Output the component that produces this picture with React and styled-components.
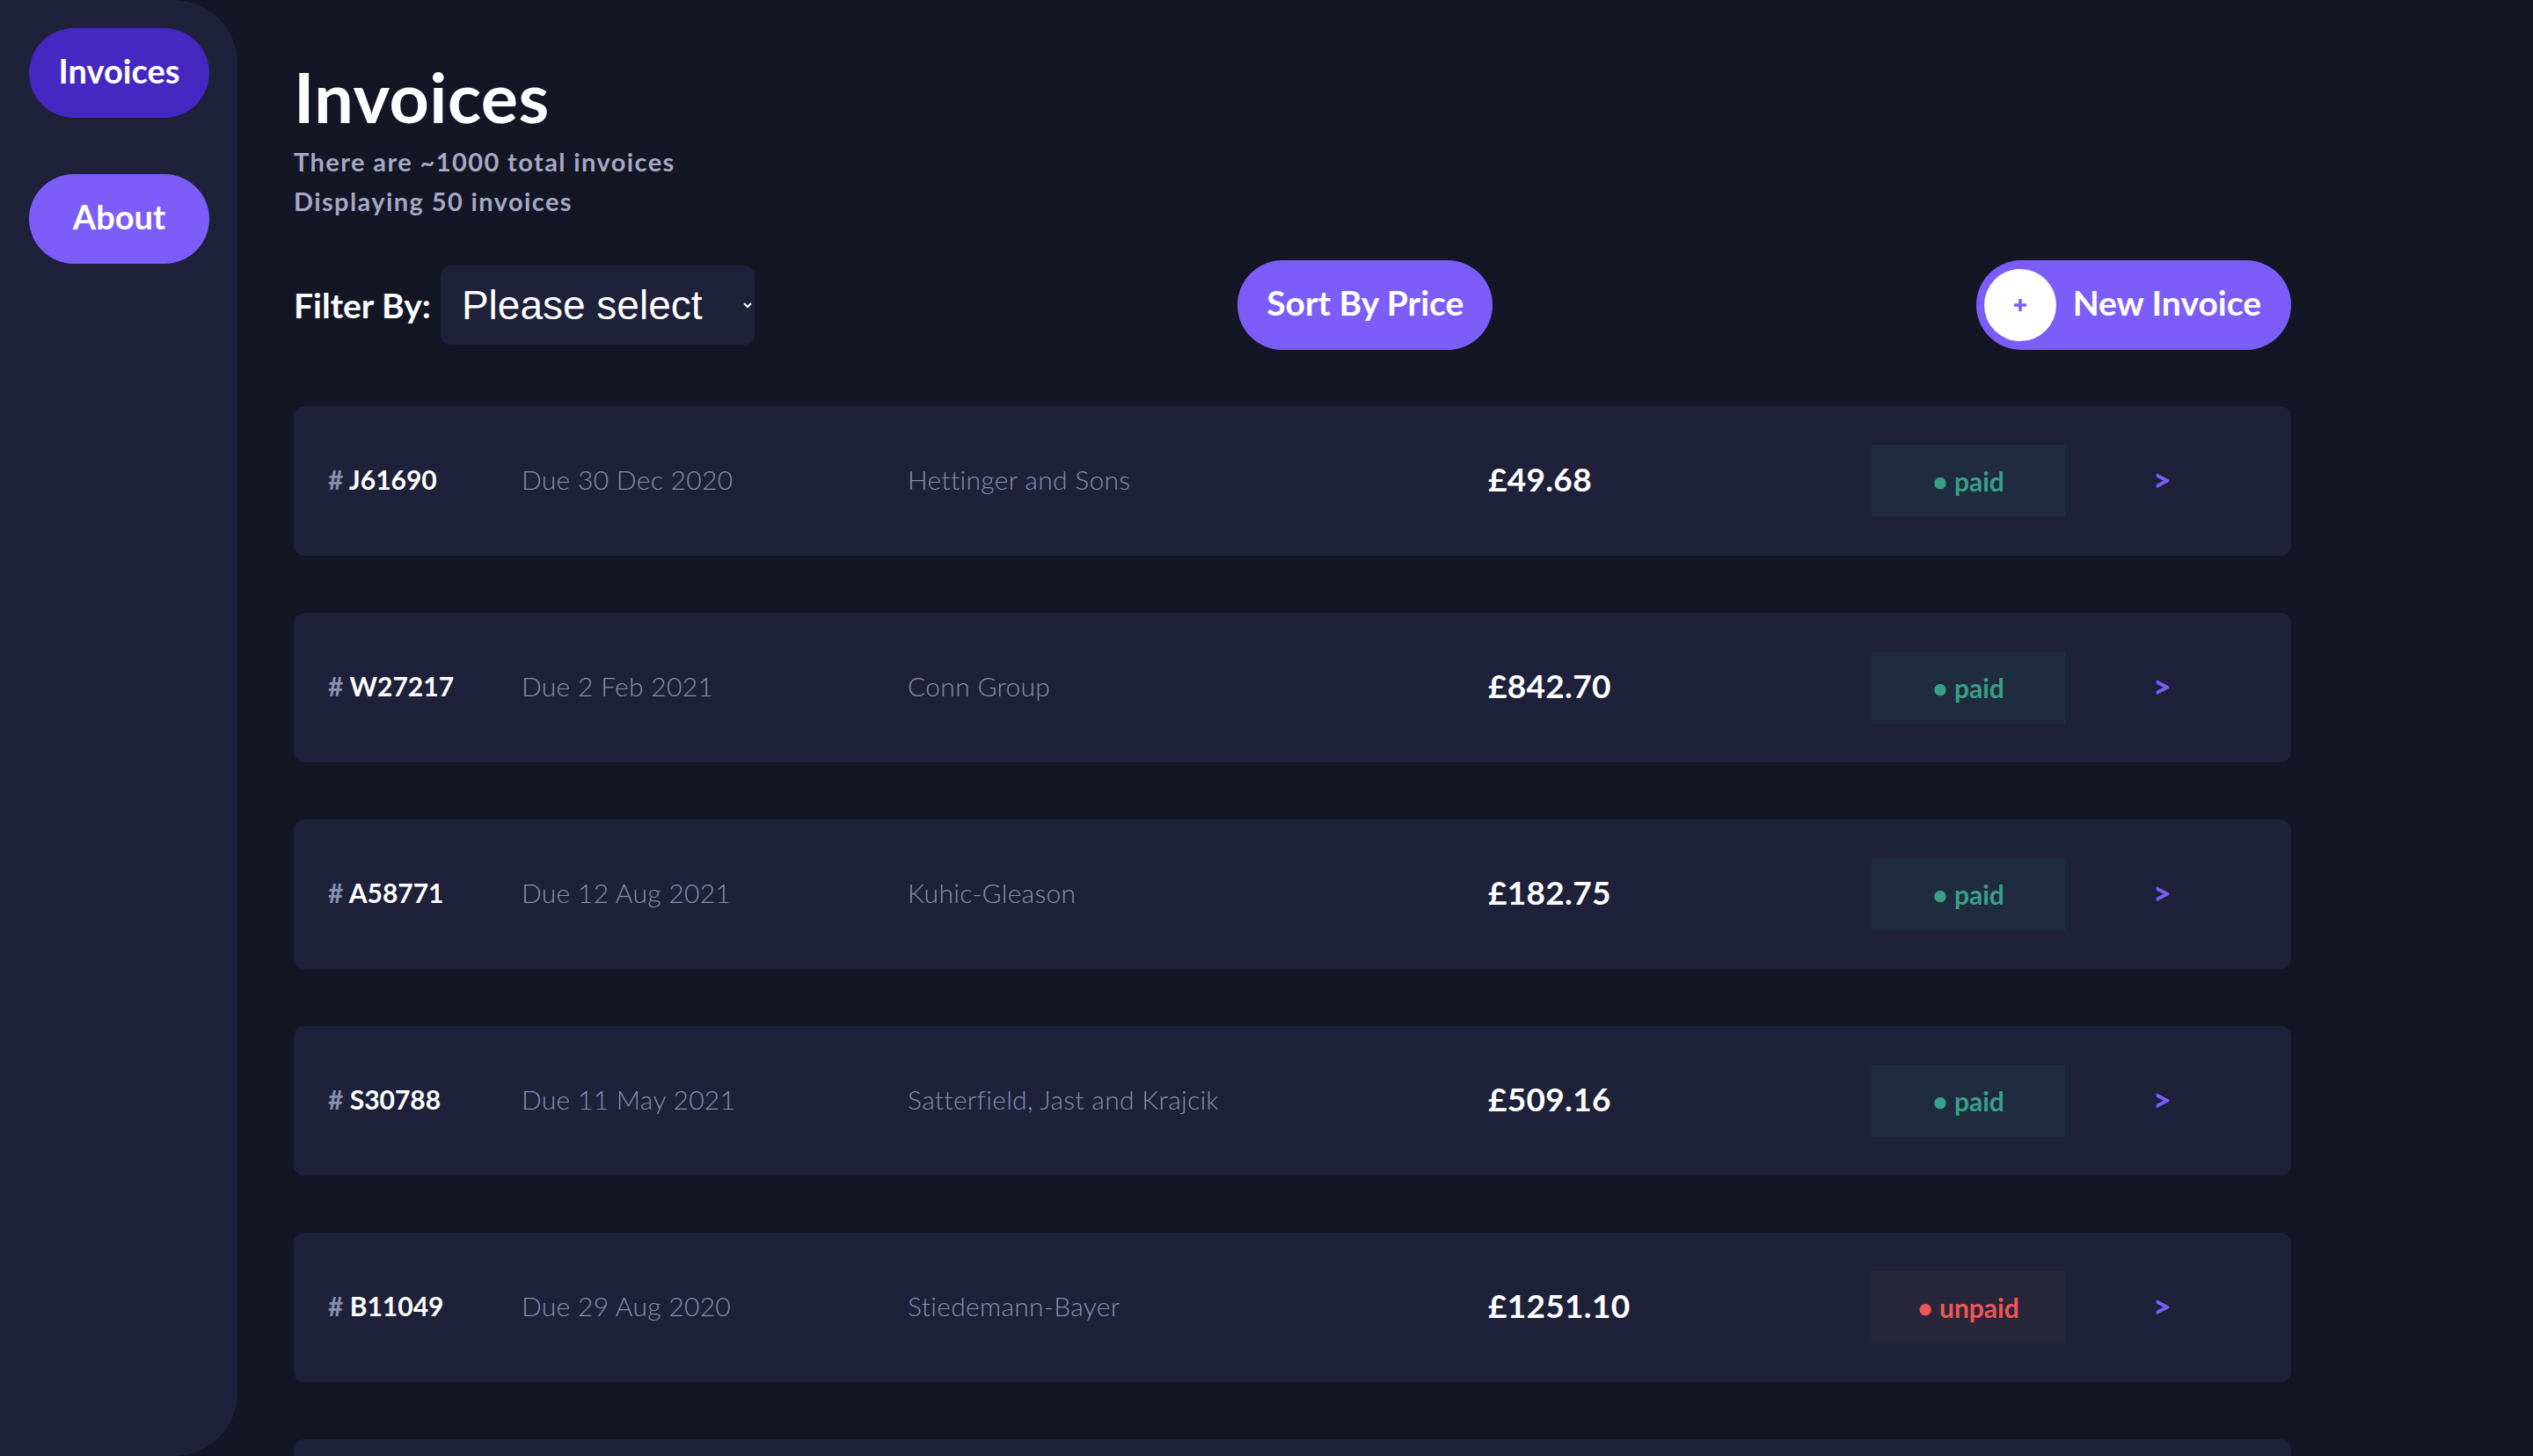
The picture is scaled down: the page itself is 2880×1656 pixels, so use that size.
import React from "react";
import styled, { createGlobalStyle } from "styled-components";

const GlobalStyle = createGlobalStyle`
  body {
    margin: 0;
    background: #141625;
    color: #fff;
    font-family: Lato, "Noto Sans", sans-serif;
  }
`;

const Page = styled.div`
  display: flex;
  align-items: flex-start;
`;

const Sidebar = styled.nav`
  position: sticky;
  top: 0;
  flex: 0 0 270px;
  height: 100vh;
  box-sizing: border-box;
  padding: 32px 0 0 33px;
  background: #1e2139;
  border-radius: 0 72px 72px 0;
  display: flex;
  flex-direction: column;
  gap: 64px;
`;

const NavButton = styled.a`
  width: 205px;
  height: 102px;
  box-sizing: border-box;
  padding-bottom: 7px;
  border-radius: 51px;
  display: flex;
  align-items: center;
  justify-content: center;
  background: ${(p) => (p.$active ? "#4527c2" : "#7c5dfa")};
  color: #fff;
  font-size: 38px;
  font-weight: 700;
  text-decoration: none;
`;

const Main = styled.main`
  width: 2271px;
  padding: 66px 0 64px 64px;
`;

const Title = styled.h1`
  margin: 0;
  font-size: 79px;
  line-height: 88px;
  font-weight: 700;
  letter-spacing: 0.5px;
`;

const Meta = styled.p`
  margin: 0;
  font-size: 29px;
  line-height: 45px;
  font-weight: 700;
  letter-spacing: 1.4px;
  color: #a6a8c4;
`;

const MetaBlock = styled.div`
  margin-top: 7px;
`;

const Toolbar = styled.div`
  margin-top: 45px;
  display: flex;
  align-items: center;
  justify-content: space-between;
`;

const FilterGroup = styled.label`
  display: flex;
  align-items: center;
  gap: 11px;
  font-size: 39px;
  font-weight: 700;
`;

const Select = styled.select`
  width: 357px;
  height: 90px;
  padding: 0 10px 0 20px;
  border: none;
  border-radius: 12px;
  background: #1e2139;
  color: #fff;
  font-family: "Liberation Sans", Arial, sans-serif;
  font-size: 46px;
`;

const PillButton = styled.button`
  height: 102px;
  border: none;
  border-radius: 51px;
  background: #7c5dfa;
  color: #fff;
  font-family: inherit;
  font-size: 39px;
  font-weight: 700;
  display: flex;
  align-items: center;
  gap: 19px;
  padding: ${(p) => (p.$withIcon ? "0 34px 6px 9px" : "0 33px 6px")};
  cursor: pointer;
`;

const PlusCircle = styled.span`
  width: 82px;
  height: 82px;
  margin-top: 6px;
  border-radius: 50%;
  background: #fff;
  display: flex;
  align-items: center;
  justify-content: center;
`;

const List = styled.div`
  margin-top: 64px;
  display: flex;
  flex-direction: column;
  gap: 65px;
`;

const Row = styled.div`
  height: 170px;
  box-sizing: border-box;
  padding-left: 39px;
  background: #1e2139;
  border-radius: 12px;
  display: grid;
  grid-template-columns: 220px 439px 660px 436px 220px 1fr;
  align-items: center;
`;

const Cell = styled.span`
  margin-top: -5px;
`;

const InvoiceId = styled(Cell)`
  font-size: 30px;
  font-weight: 700;
  color: #fff;
`;

const Hash = styled.span`
  color: #888eb0;
`;

const Muted = styled(Cell)`
  font-size: 30px;
  font-weight: 300;
  letter-spacing: 0.3px;
  color: #888eb0;
`;

const Amount = styled(Cell)`
  font-size: 37px;
  font-weight: 700;
  letter-spacing: 0.3px;
`;

const Badge = styled.span`
  width: 220px;
  height: 82px;
  display: flex;
  align-items: center;
  justify-content: center;
  gap: 8px;
  font-size: 30px;
  font-weight: 700;
  background: ${(p) => (p.$status === "paid" ? "#1f2c3f" : "#28263a")};
  color: ${(p) => (p.$status === "paid" ? "#3a9f89" : "#ec5757")};
`;

const Chevron = styled(Cell)`
  padding-left: 100px;
  color: #7c5dfa;
  font-size: 36px;
  font-weight: 900;
`;

const invoices = [
  { id: "J61690", due: "30 Dec 2020", client: "Hettinger and Sons", total: "49.68", status: "paid" },
  { id: "W27217", due: "2 Feb 2021", client: "Conn Group", total: "842.70", status: "paid" },
  { id: "A58771", due: "12 Aug 2021", client: "Kuhic-Gleason", total: "182.75", status: "paid" },
  { id: "S30788", due: "11 May 2021", client: "Satterfield, Jast and Krajcik", total: "509.16", status: "paid" },
  { id: "B11049", due: "29 Aug 2020", client: "Stiedemann-Bayer", total: "1251.10", status: "unpaid" },
  { id: "K70213", due: "4 Mar 2021", client: "Runolfsdottir LLC", total: "318.42", status: "paid" },
  { id: "M44501", due: "17 Jan 2021", client: "Bernier Inc", total: "96.30", status: "unpaid" },
];

export default function App() {
  return (
    <>
      <GlobalStyle />
      <Page>
        <Sidebar>
          <NavButton href="#" $active>Invoices</NavButton>
          <NavButton href="#">About</NavButton>
        </Sidebar>

        <Main>
          <Title>Invoices</Title>
          <MetaBlock>
            <Meta>There are ~1000 total invoices</Meta>
            <Meta>Displaying 50 invoices</Meta>
          </MetaBlock>

          <Toolbar>
            <FilterGroup>
              Filter By:
              <Select defaultValue="">
                <option value="">Please select</option>
                <option value="paid">Paid</option>
                <option value="unpaid">Unpaid</option>
              </Select>
            </FilterGroup>
            <PillButton>Sort By Price</PillButton>
            <PillButton $withIcon>
              <PlusCircle>
                <svg width="16" height="16" viewBox="0 0 16 16">
                  <path d="M8 1v14M1 8h14" stroke="#7c5dfa" strokeWidth="3.5" />
                </svg>
              </PlusCircle>
              New Invoice
            </PillButton>
          </Toolbar>

          <List>
            {invoices.map((inv) => (
              <Row key={inv.id}>
                <InvoiceId>
                  <Hash># </Hash>
                  {inv.id}
                </InvoiceId>
                <Muted>Due {inv.due}</Muted>
                <Muted>{inv.client}</Muted>
                <Amount>£{inv.total}</Amount>
                <Badge $status={inv.status}>• {inv.status}</Badge>
                <Chevron>&gt;</Chevron>
              </Row>
            ))}
          </List>
        </Main>
      </Page>
    </>
  );
}
